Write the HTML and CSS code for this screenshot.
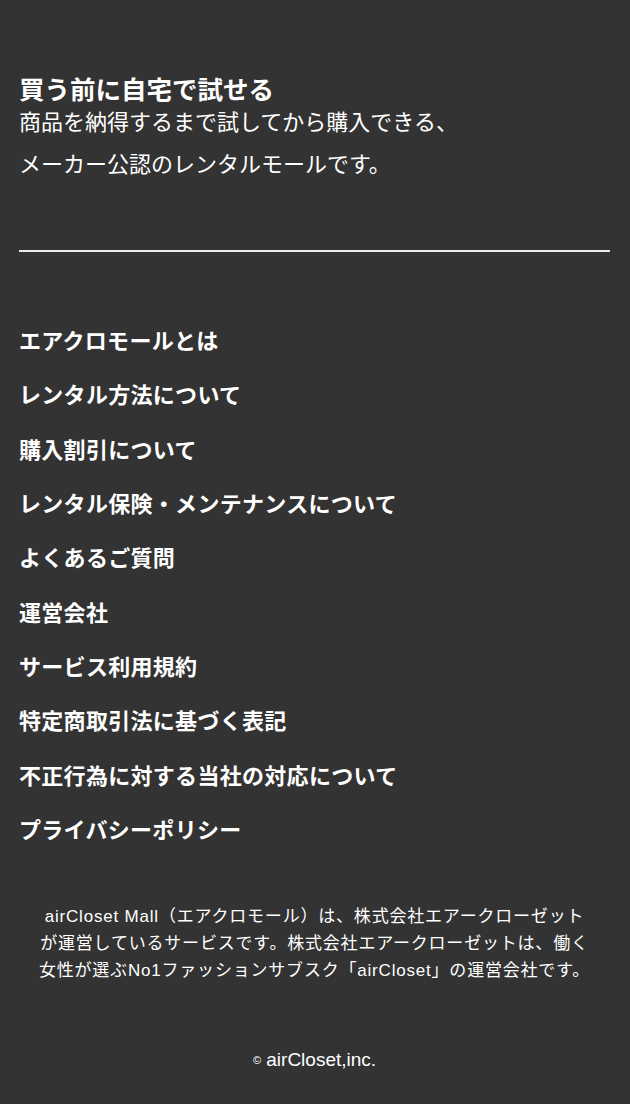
FILE: index.html
```html
<!DOCTYPE html>
<html lang="ja">
<head>
<meta charset="utf-8">
<title>airCloset Mall</title>
<link rel="stylesheet" href="styles.css">
</head>
<body>
<footer class="site-footer">
  <section class="intro">
    <h2 class="intro-title">買う前に自宅で試せる</h2>
    <p class="intro-text">商品を納得するまで試してから購入できる、<br>メーカー公認のレンタルモールです。</p>
  </section>
  <hr class="divider">
  <nav class="footer-nav">
    <a class="nav-link" href="#">エアクロモールとは</a>
    <a class="nav-link" href="#">レンタル方法について</a>
    <a class="nav-link" href="#">購入割引について</a>
    <a class="nav-link" href="#">レンタル保険・メンテナンスについて</a>
    <a class="nav-link" href="#">よくあるご質問</a>
    <a class="nav-link" href="#">運営会社</a>
    <a class="nav-link" href="#">サービス利用規約</a>
    <a class="nav-link" href="#">特定商取引法に基づく表記</a>
    <a class="nav-link" href="#">不正行為に対する当社の対応について</a>
    <a class="nav-link" href="#">プライバシーポリシー</a>
  </nav>
  <p class="about">airCloset Mall（エアクロモール）は、株式会社エアークローゼット<br>が運営しているサービスです。株式会社エアークローゼットは、働く<br>女性が選ぶNo1ファッションサブスク「airCloset」の運営会社です。</p>
  <p class="copyright"><span class="copy-mark">©</span> airCloset,inc.</p>
</footer>
</body>
</html>
```
FILE: styles.css
```css
html, body {
  margin: 0;
  padding: 0;
  background: #333333;
}

body {
  color: #ffffff;
  font-family: "Liberation Sans", "Noto Sans CJK JP", sans-serif;
}

.site-footer {
  display: flex;
  flex-direction: column;
  padding: 78px 20px 30px 19px;
}

.intro-title {
  margin: 0;
  font-family: "Noto Sans CJK JP", sans-serif;
  font-size: 25.5px;
  font-weight: 700;
  line-height: 20px;
}

.intro-text {
  margin: 0;
  font-family: "Noto Sans CJK JP", sans-serif;
  font-size: 22px;
  font-weight: 400;
  line-height: 42px;
  margin-top: 1px;
}

.divider {
  margin: 67px 0 0;
  border: 0;
  height: 2px;
  background: #ececec;
}

.footer-nav {
  display: flex;
  flex-direction: column;
  margin-top: 60px;
}

.nav-link {
  display: block;
  color: #ffffff;
  text-decoration: none;
  font-family: "Noto Sans CJK JP", sans-serif;
  font-size: 22px;
  font-weight: 700;
  letter-spacing: 0.3px;
  line-height: 54.33px;
  white-space: nowrap;
}

.about {
  margin: 48px 0 0;
  text-align: center;
  font-size: 17px;
  letter-spacing: 0.8px;
  line-height: 27px;
  white-space: nowrap;
}

.copyright {
  margin: 63px 0 0;
  text-align: center;
  font-size: 19px;
  line-height: 26px;
}

.copy-mark {
  font-size: 11px;
  vertical-align: 2px;
}
```
